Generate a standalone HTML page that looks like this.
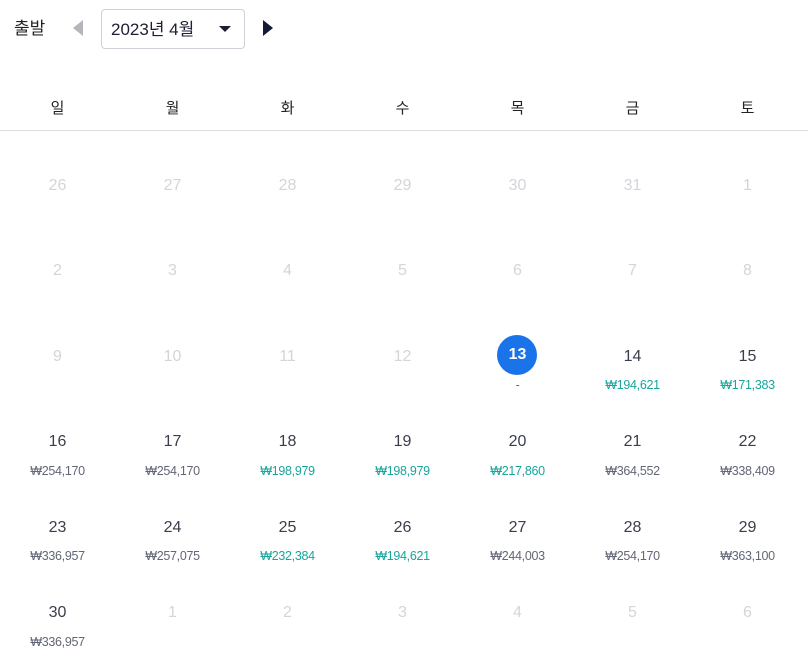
<!DOCTYPE html>
<html><head><meta charset="utf-8"><style>
*{margin:0;padding:0;box-sizing:border-box}
body{width:808px;height:662px;background:#fff;font-family:"Liberation Sans","Noto Sans CJK KR",sans-serif;position:relative;overflow:hidden;color:#2b2f3e}
.a{position:absolute}
.d{position:absolute;width:115px;text-align:center;font-size:16px;line-height:20px;color:#3a3e4c;margin-top:2px}
.x{color:#d3d5da}
.p{position:absolute;width:115px;text-align:center;font-size:12.5px;line-height:16px;color:#626676;margin-top:1px;letter-spacing:-0.3px}
.t{color:#18a59b}
.w{position:absolute;width:115px;text-align:center;font-size:15px;line-height:20px;top:99px;color:#222}
</style></head><body>
<div class="a" style="left:14px;top:18px;font-size:17px;line-height:22px;color:#222">출발</div>
<div class="a" style="left:73px;top:20px;width:0;height:0;border-top:8px solid transparent;border-bottom:8px solid transparent;border-right:10px solid #b4b6bd"></div>
<div class="a" style="left:101px;top:9px;width:144px;height:40px;border:1px solid #cfd1d8;border-radius:4px"></div>
<div class="a" style="left:111px;top:19px;font-size:17px;line-height:22px;color:#1c1f33">2023년 4월</div>
<div class="a" style="left:219px;top:26px;width:0;height:0;border-left:6px solid transparent;border-right:6px solid transparent;border-top:6px solid #1c1f33"></div>
<div class="a" style="left:263px;top:20px;width:0;height:0;border-top:8px solid transparent;border-bottom:8px solid transparent;border-left:10px solid #16183a"></div>
<div class="w" style="left:0">일</div><div class="w" style="left:115px">월</div><div class="w" style="left:230px">화</div><div class="w" style="left:345px">수</div><div class="w" style="left:460px">목</div><div class="w" style="left:575px">금</div><div class="w" style="left:690px">토</div>
<div class="a" style="left:0;top:130px;width:808px;height:1px;background:#dcdde2"></div>

<div class="d x" style="left:0;top:174px">26</div><div class="d x" style="left:115px;top:174px">27</div><div class="d x" style="left:230px;top:174px">28</div><div class="d x" style="left:345px;top:174px">29</div><div class="d x" style="left:460px;top:174px">30</div><div class="d x" style="left:575px;top:174px">31</div><div class="d x" style="left:690px;top:174px">1</div>

<div class="d x" style="left:0;top:259px">2</div><div class="d x" style="left:115px;top:259px">3</div><div class="d x" style="left:230px;top:259px">4</div><div class="d x" style="left:345px;top:259px">5</div><div class="d x" style="left:460px;top:259px">6</div><div class="d x" style="left:575px;top:259px">7</div><div class="d x" style="left:690px;top:259px">8</div>

<div class="d x" style="left:0;top:345px">9</div><div class="d x" style="left:115px;top:345px">10</div><div class="d x" style="left:230px;top:345px">11</div><div class="d x" style="left:345px;top:345px">12</div>
<div class="a" style="left:497px;top:335px;width:40px;height:40px;border-radius:50%;background:#1a73e8"></div>
<div class="d" style="left:460px;top:343px;color:#fff;font-weight:bold">13</div>
<div class="p" style="left:460px;top:376px">-</div>
<div class="d" style="left:575px;top:345px">14</div><div class="p t" style="left:575px;top:376px">₩194,621</div>
<div class="d" style="left:690px;top:345px">15</div><div class="p t" style="left:690px;top:376px">₩171,383</div>

<div class="d" style="left:0;top:430px">16</div><div class="p" style="left:0;top:462px">₩254,170</div>
<div class="d" style="left:115px;top:430px">17</div><div class="p" style="left:115px;top:462px">₩254,170</div>
<div class="d" style="left:230px;top:430px">18</div><div class="p t" style="left:230px;top:462px">₩198,979</div>
<div class="d" style="left:345px;top:430px">19</div><div class="p t" style="left:345px;top:462px">₩198,979</div>
<div class="d" style="left:460px;top:430px">20</div><div class="p t" style="left:460px;top:462px">₩217,860</div>
<div class="d" style="left:575px;top:430px">21</div><div class="p" style="left:575px;top:462px">₩364,552</div>
<div class="d" style="left:690px;top:430px">22</div><div class="p" style="left:690px;top:462px">₩338,409</div>

<div class="d" style="left:0;top:516px">23</div><div class="p" style="left:0;top:547px">₩336,957</div>
<div class="d" style="left:115px;top:516px">24</div><div class="p" style="left:115px;top:547px">₩257,075</div>
<div class="d" style="left:230px;top:516px">25</div><div class="p t" style="left:230px;top:547px">₩232,384</div>
<div class="d" style="left:345px;top:516px">26</div><div class="p t" style="left:345px;top:547px">₩194,621</div>
<div class="d" style="left:460px;top:516px">27</div><div class="p" style="left:460px;top:547px">₩244,003</div>
<div class="d" style="left:575px;top:516px">28</div><div class="p" style="left:575px;top:547px">₩254,170</div>
<div class="d" style="left:690px;top:516px">29</div><div class="p" style="left:690px;top:547px">₩363,100</div>

<div class="d" style="left:0;top:601px">30</div><div class="p" style="left:0;top:633px">₩336,957</div>
<div class="d x" style="left:115px;top:601px">1</div><div class="d x" style="left:230px;top:601px">2</div><div class="d x" style="left:345px;top:601px">3</div><div class="d x" style="left:460px;top:601px">4</div><div class="d x" style="left:575px;top:601px">5</div><div class="d x" style="left:690px;top:601px">6</div>
</body></html>
